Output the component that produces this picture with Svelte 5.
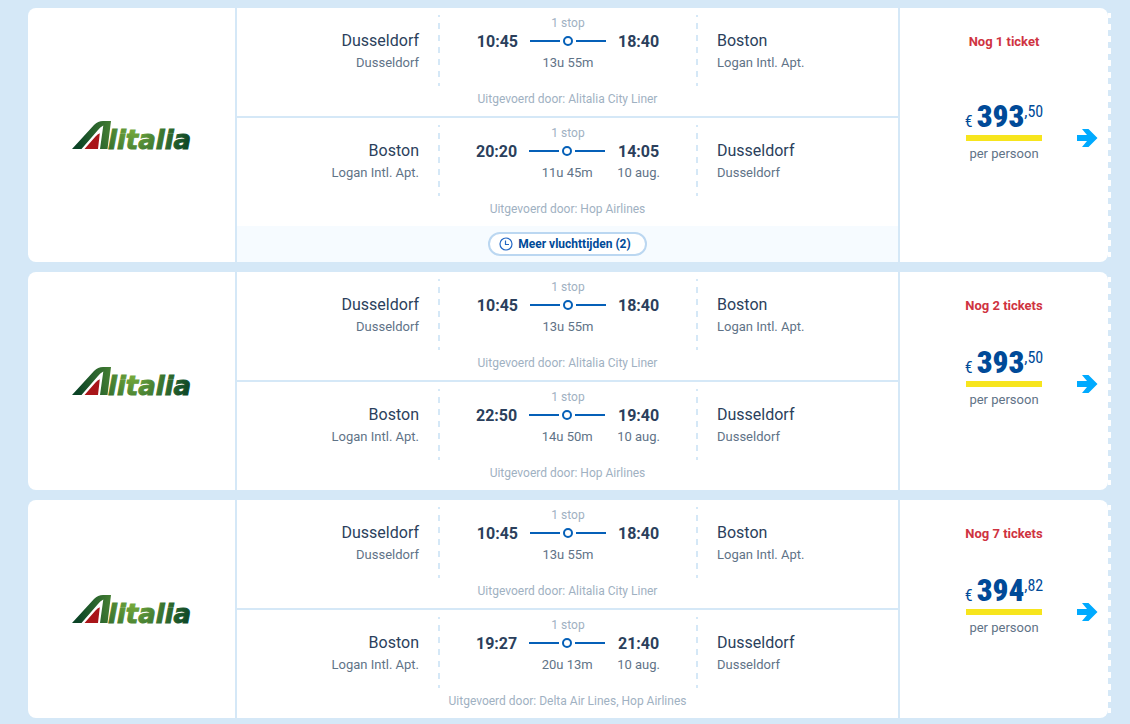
<script>
    const outbound = {
        from: 'Dusseldorf', fromAirport: 'Dusseldorf', departure: '10:45',
        to: 'Boston', toAirport: 'Logan Intl. Apt.', arrival: '18:40',
        duration: '13u 55m', date: '', operator: 'Alitalia City Liner'
    };

    const inbound = {
        from: 'Boston', fromAirport: 'Logan Intl. Apt.',
        to: 'Dusseldorf', toAirport: 'Dusseldorf', date: '10 aug.'
    };

    let flights = $state([
        {
            tickets: 'Nog 1 ticket', euros: '393', cents: '50', more: 2,
            legs: [outbound, { ...inbound, departure: '20:20', arrival: '14:05', duration: '11u 45m', operator: 'Hop Airlines' }]
        },
        {
            tickets: 'Nog 2 tickets', euros: '393', cents: '50', more: 0,
            legs: [outbound, { ...inbound, departure: '22:50', arrival: '19:40', duration: '14u 50m', operator: 'Hop Airlines' }]
        },
        {
            tickets: 'Nog 7 tickets', euros: '394', cents: '82', more: 0,
            legs: [outbound, { ...inbound, departure: '19:27', arrival: '21:40', duration: '20u 13m', operator: 'Delta Air Lines, Hop Airlines' }]
        }
    ]);
</script>

{#snippet logo(id)}
    <svg class="logo" width="120" height="29" viewBox="0 0 120 29" role="img" aria-label="Alitalia">
        <defs>
            <radialGradient id="green-{id}" gradientUnits="userSpaceOnUse" cx="62" cy="9" r="58">
                <stop offset="0" stop-color="#76aa3c" />
                <stop offset="0.45" stop-color="#3f7a31" />
                <stop offset="1" stop-color="#0c4426" />
            </radialGradient>
        </defs>
        <path fill="url(#green-{id})" d="M0 28 L22 4 Q26 0 31 0 H39 L35.5 28 H28 L31.3 4.5 Q28 6 26 9 L9.5 28 Z" />
        <path fill="#a91519" d="M12.5 28 L23.5 15.5 Q25.5 13 27.8 12.3 L26 28 Z" />
        <text x="36" y="28" fill="url(#green-{id})" stroke="url(#green-{id})">litalia</text>
    </svg>
{/snippet}

<main class="results">
    {#each flights as flight, i}
        <article class="card">
            <div class="airline">{@render logo(i)}</div>

            <div class="legs">
                {#each flight.legs as leg}
                    <section class="leg">
                        <div class="place from">
                            <span class="city">{leg.from}</span>
                            <span class="airport">{leg.fromAirport}</span>
                        </div>
                        <div class="trip">
                            <span class="stop">1 stop</span>
                            <time class="time">{leg.departure}</time>
                            <span class="track"><i></i></span>
                            <time class="time">{leg.arrival}</time>
                            <span class="duration">{leg.duration}</span>
                            <span class="date">{leg.date}</span>
                        </div>
                        <div class="place to">
                            <span class="city">{leg.to}</span>
                            <span class="airport">{leg.toAirport}</span>
                        </div>
                        <p class="operator">Uitgevoerd door: {leg.operator}</p>
                    </section>
                {/each}

                {#if flight.more}
                    <div class="more">
                        <button type="button">
                            <svg width="14" height="14" viewBox="0 0 14 14" fill="none" stroke="#2467c4" aria-hidden="true">
                                <circle cx="7" cy="7" r="6" stroke-width="1.2" />
                                <path d="M6.5 3.5 V7.5 H10" stroke-width="1.2" />
                            </svg>
                            Meer vluchttijden ({flight.more})
                        </button>
                    </div>
                {/if}
            </div>

            <div class="offer">
                <strong class="tickets">{flight.tickets}</strong>
                <div class="price">
                    <div class="amount">
                        <span class="euro">€</span>
                        <span class="whole">{flight.euros}</span>
                        <span class="cents">,{flight.cents}</span>
                    </div>
                    <span class="per">per persoon</span>
                </div>
                <a class="go" href="#boek" aria-label="Selecteer vlucht">
                    <svg width="21" height="18" viewBox="0 0 21 18" aria-hidden="true">
                        <path fill="#00aaff" d="M0 6 H10 L5 0 H11.5 L20.5 9 L11.5 18 H5 L10 12 H0 Z" />
                    </svg>
                </a>
            </div>
        </article>
    {/each}
</main>

<style>
    :global(body) {
        background: #d5e8f7;
        font-family: Roboto, Arial, sans-serif;
    }
    .results {
        display: flex;
        flex-direction: column;
        gap: 10px;
        padding: 8px 22px 6px 28px;
    }
    .card {
        position: relative;
        display: grid;
        grid-template-columns: 207px 1fr 208px;
        gap: 2px;
    }
    /* perforated ticket edge */
    .card::after {
        content: '';
        position: absolute;
        top: 5px;
        bottom: 5px;
        left: 100%;
        width: 3px;
        background: repeating-linear-gradient(#fff 0 5px, transparent 5px 11px, #fff 11px 12px);
    }
    .airline {
        display: flex;
        align-items: center;
        justify-content: center;
        background: #fff;
        border-radius: 8px 0 0 8px;
    }
    .logo { overflow: visible; }
    .logo text {
        font: italic 700 26px 'DejaVu Sans', sans-serif;
        stroke-width: 1px;
    }

    .legs { display: flex; flex-direction: column; }
    .leg {
        display: grid;
        grid-template-columns: 1fr 260px 200px;
        padding: 7px 0 9px;
        background: #fff;
    }
    .leg + .leg { margin-top: 2px; }
    .place {
        display: flex;
        flex-direction: column;
        padding: 16px 19px 0;
    }
    .from { text-align: right; }
    .city {
        font-size: 16px;
        line-height: 20px;
        color: #2b3f5c;
    }
    .airport, .duration, .date {
        font-size: 13px;
        line-height: 24px;
        color: #5f7387;
    }
    .trip {
        display: grid;
        grid-template-columns: auto 76px auto;
        grid-template-rows: 16px 20px 24px;
        column-gap: 12px;
        justify-content: center;
        justify-items: center;
        height: 71px;
        background:
            repeating-linear-gradient(#d5e8f7 0 2px, transparent 2px 8px, #d5e8f7 8px 12px) left / 2px 100% no-repeat,
            repeating-linear-gradient(#d5e8f7 0 2px, transparent 2px 8px, #d5e8f7 8px 12px) right / 2px 100% no-repeat;
    }
    .stop {
        grid-column: 1 / -1;
        font-size: 12px;
        line-height: 16px;
        color: #9fb1c2;
    }
    .time {
        font-size: 16px;
        font-weight: 700;
        line-height: 22px;
        color: #2b3f5c;
    }
    .track {
        display: flex;
        align-items: center;
        gap: 3px;
        width: 100%;
    }
    .track::before, .track::after {
        content: '';
        flex: 1;
        height: 2px;
        background: #0560b8;
    }
    .track i {
        box-sizing: border-box;
        width: 10px;
        height: 10px;
        border: 2px solid #0560b8;
        border-radius: 50%;
    }
    .duration { grid-column: 2; }
    .operator {
        grid-column: 1 / -1;
        margin: 5px 0 0;
        font-size: 12px;
        line-height: 16px;
        text-align: center;
        color: #9fb1c2;
    }

    .more {
        display: flex;
        justify-content: center;
        padding: 6px 0;
        background: #f6fbff;
    }
    button {
        display: flex;
        align-items: center;
        gap: 5px;
        height: 24px;
        padding: 0 14px 0 9px;
        border: 2px solid #bbd7f1;
        border-radius: 12px;
        background: #fff;
        color: #004a98;
        font: 700 12px Roboto, Arial, sans-serif;
        cursor: pointer;
    }

    .offer {
        display: grid;
        grid-template-columns: 1fr auto 1fr;
        grid-template-rows: 1fr auto 1fr;
        background: #fff;
        border-radius: 0 8px 8px 0;
    }
    .tickets {
        grid-area: 1 / 1 / 2 / -1;
        padding-top: 24px;
        font-size: 13px;
        font-weight: 700;
        line-height: 20px;
        text-align: center;
        color: #cf3341;
    }
    .price {
        grid-area: 2 / 2;
        text-align: center;
    }
    .amount {
        display: flex;
        justify-content: center;
        width: 76px;
        height: 32px;
        border-bottom: 6px solid #f7e51d;
        color: #004a98;
        font-family: 'Roboto Condensed', 'Liberation Sans Narrow', sans-serif;
        line-height: 28px;
    }
    .euro {
        padding: 5px 4px 0 0;
        font-size: 16px;
    }
    .whole {
        font-size: 31px;
        font-weight: 900;
    }
    .cents {
        font-size: 16px;
        line-height: 18px;
    }
    .per {
        font-size: 13px;
        line-height: 26px;
        color: #5f7387;
    }
    .go {
        grid-area: 1 / 3 / -1 / 4;
        align-self: center;
        justify-self: end;
        display: flex;
        padding: 6px 10px 0 0;
    }
</style>
